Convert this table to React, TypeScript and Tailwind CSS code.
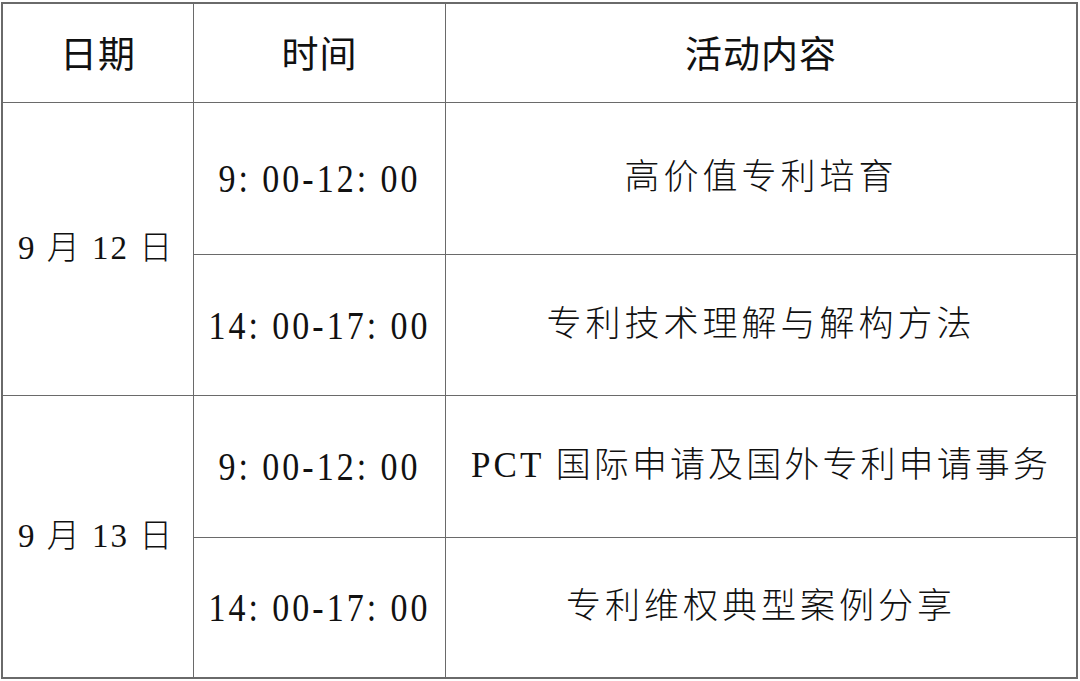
import React from "react";

const serif = { fontFamily: '"Liberation Serif", "Noto Sans CJK SC", serif' };

function Cell({ children, className = "" }: { children?: React.ReactNode; className?: string }) {
  return <div className={`bg-white flex items-center justify-center ${className}`}>{children}</div>;
}

function Time({ t }: { t: string }) {
  return (
    <span
      className="inline-block text-[34px] tracking-[3px] text-[#111] scale-y-[1.2] whitespace-pre"
      style={serif}
    >
      {t}
    </span>
  );
}

function Act({ t, tight = false }: { t: string; tight?: boolean }) {
  return (
    <span
      className={`text-[35px] font-light text-[#111] whitespace-pre ${tight ? "tracking-[3.1px]" : "tracking-[4px]"}`}
      style={serif}
    >
      {t}
    </span>
  );
}

function DateText({ t }: { t: string }) {
  return (
    <span className="text-[33px] font-light text-[#111] whitespace-pre tracking-[2px] pr-[4px]" style={serif}>
      {t}
    </span>
  );
}

function Head({ t }: { t: string }) {
  return (
    <span
      className="text-[37px] font-normal text-[#111] tracking-[1px]"
      style={{ fontFamily: '"Noto Sans CJK SC", sans-serif' }}
    >
      {t}
    </span>
  );
}

export default function App() {
  return (
    <div className="w-[1080px] h-[681px] bg-white pl-[1px] pt-[2px]">
      <div className="w-[1077px] p-[2px] bg-[#6a6a6a] grid grid-cols-[190px_251px_630px] grid-rows-[98px_151px_140px_141px_139px] gap-[1px]">
        <Cell>
          <Head t="日期" />
        </Cell>
        <Cell>
          <Head t="时间" />
        </Cell>
        <Cell>
          <Head t="活动内容" />
        </Cell>

        <Cell className="row-span-2">
          <DateText t="9 月 12 日" />
        </Cell>
        <Cell>
          <Time t="9: 00-12: 00" />
        </Cell>
        <Cell>
          <Act t="高价值专利培育" />
        </Cell>
        <Cell>
          <Time t="14: 00-17: 00" />
        </Cell>
        <Cell>
          <Act t="专利技术理解与解构方法" />
        </Cell>

        <Cell className="row-span-2">
          <DateText t="9 月 13 日" />
        </Cell>
        <Cell>
          <Time t="9: 00-12: 00" />
        </Cell>
        <Cell>
          <Act t="PCT 国际申请及国外专利申请事务" tight />
        </Cell>
        <Cell>
          <Time t="14: 00-17: 00" />
        </Cell>
        <Cell>
          <Act t="专利维权典型案例分享" />
        </Cell>
      </div>
    </div>
  );
}
